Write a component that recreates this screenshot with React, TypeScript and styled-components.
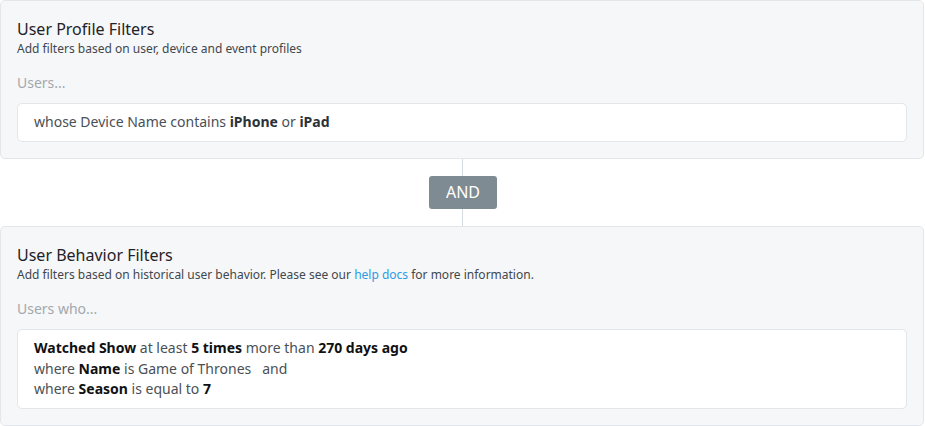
import React from "react";
import styled, { createGlobalStyle } from "styled-components";

const Global = createGlobalStyle`
  html, body { margin: 0; padding: 0; background: #ffffff; }
  body { font-family: "Noto Sans", "Open Sans", sans-serif; }
  * { box-sizing: border-box; }
`;

const Page = styled.div`
  width: 925px;
  display: flex;
  flex-direction: column;
  align-items: stretch;
`;

const Card = styled.section`
  width: 924px;
  background: #f6f7f9;
  border: 1px solid #e3e6ea;
  border-radius: 5px;
  padding: 17px 16px 16px 16px;
  display: flex;
  flex-direction: column;
`;

const Title = styled.h2`
  margin: 0;
  font-size: 16px;
  line-height: 23px;
  font-weight: 400;
  color: #1f2327;
`;

const Subtitle = styled.p`
  margin: 0;
  font-size: 12px;
  line-height: 16px;
  color: #41474d;
`;

const Link = styled.a`
  color: #2b9be4;
  text-decoration: none;
`;

const Lead = styled.div`
  margin-top: 16px;
  font-size: 14px;
  line-height: 20px;
  color: #a3a8ad;
`;

const FilterBox = styled.div`
  margin-top: 10px;
  background: #ffffff;
  border: 1px solid #e3e6ea;
  border-radius: 5px;
  padding: 8px 16px 9px 16px;
  font-size: 14px;
  line-height: 20px;
  color: #4a5056;
`;

const Line = styled.div`
  color: #4a5056;
  & + & { margin-top: 0.5px; }
`;

const B = styled.b<{ $tone?: "dark" | "black" }>`
  font-weight: 700;
  color: ${(p) => (p.$tone === "black" ? "#0f1113" : "#2c3237")};
`;

const Connector = styled.div`
  height: 67px;
  display: flex;
  align-items: center;
  justify-content: center;
  background: linear-gradient(#d6dbe0, #d6dbe0) no-repeat center / 1px 100%;
`;

const AndButton = styled.div`
  width: 68px;
  height: 33px;
  background: #7f8b92;
  border-radius: 3px;
  color: #ffffff;
  font-size: 16px;
  line-height: 33px;
  text-align: center;
  margin-left: 1px;
`;

export default function App() {
  return (
    <Page>
      <Global />
      <Card>
        <Title>User Profile Filters</Title>
        <Subtitle>Add filters based on user, device and event profiles</Subtitle>
        <Lead>Users...</Lead>
        <FilterBox>
          <Line>
            whose Device Name contains <B>iPhone</B> or <B>iPad</B>
          </Line>
        </FilterBox>
      </Card>
      <Connector>
        <AndButton>AND</AndButton>
      </Connector>
      <Card>
        <Title>User Behavior Filters</Title>
        <Subtitle>
          Add filters based on historical user behavior. Please see our{" "}
          <Link href="#">help docs</Link> for more information.
        </Subtitle>
        <Lead>Users who...</Lead>
        <FilterBox>
          <Line>
            <B $tone="black">Watched Show</B> at least <B $tone="black">5 times</B> more than{" "}
            <B $tone="black">270 days ago</B>
          </Line>
          <Line>
            where <B $tone="black">Name</B> is Game of Thrones&nbsp;&nbsp; and
          </Line>
          <Line>
            where <B $tone="black">Season</B> is equal to <B $tone="black">7</B>
          </Line>
        </FilterBox>
      </Card>
    </Page>
  );
}
